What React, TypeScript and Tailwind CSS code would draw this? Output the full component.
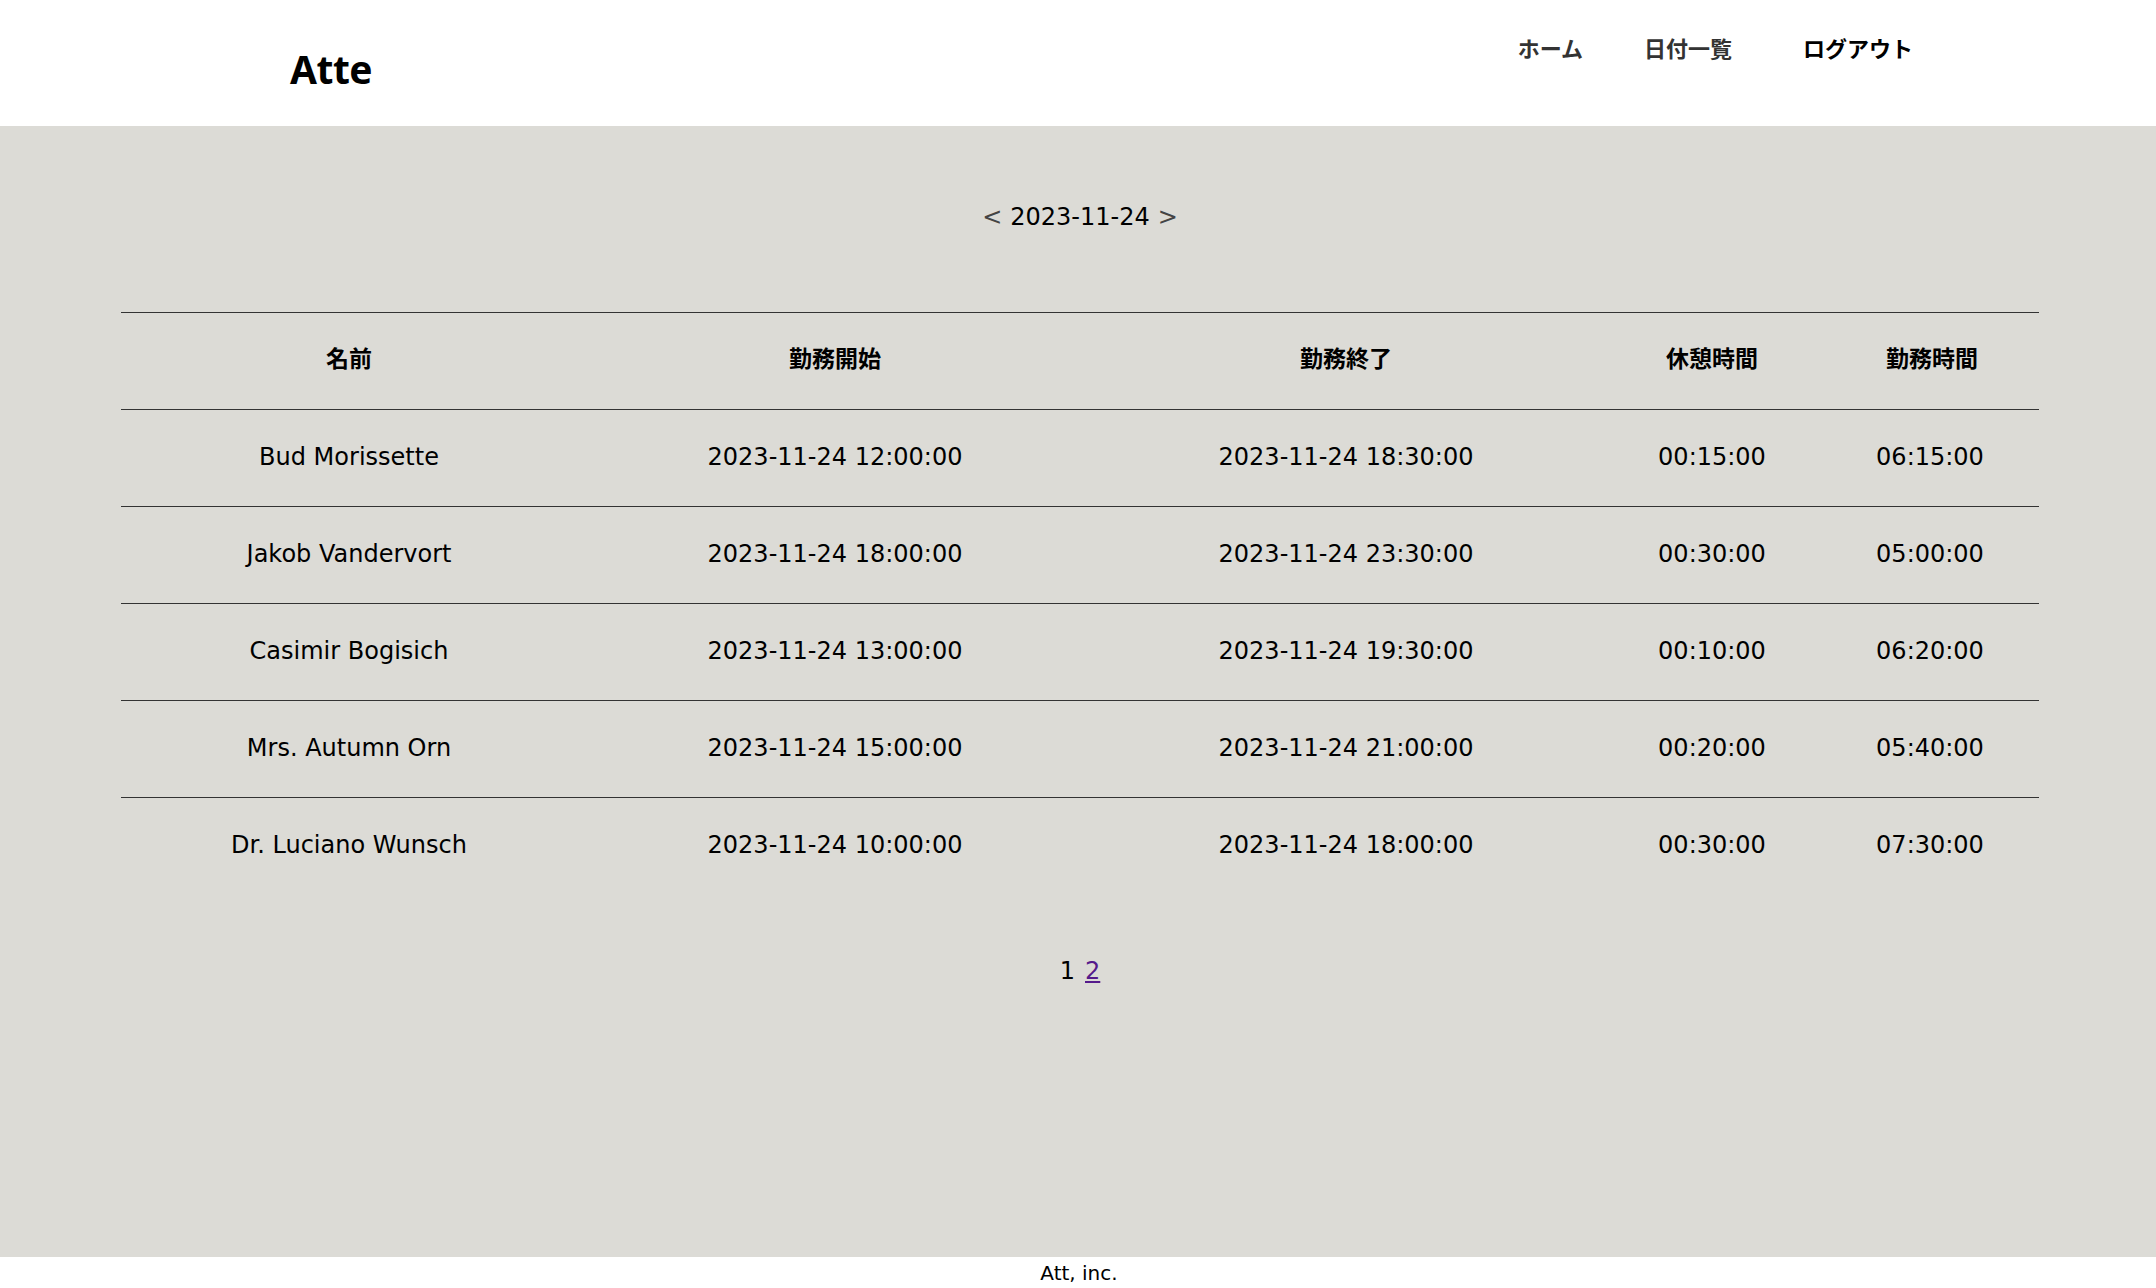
import React from "react";

const rows = [
  ["Bud Morissette", "2023-11-24 12:00:00", "2023-11-24 18:30:00", "00:15:00", "06:15:00"],
  ["Jakob Vandervort", "2023-11-24 18:00:00", "2023-11-24 23:30:00", "00:30:00", "05:00:00"],
  ["Casimir Bogisich", "2023-11-24 13:00:00", "2023-11-24 19:30:00", "00:10:00", "06:20:00"],
  ["Mrs. Autumn Orn", "2023-11-24 15:00:00", "2023-11-24 21:00:00", "00:20:00", "05:40:00"],
  ["Dr. Luciano Wunsch", "2023-11-24 10:00:00", "2023-11-24 18:00:00", "00:30:00", "07:30:00"],
];

const headers = ["名前", "勤務開始", "勤務終了", "休憩時間", "勤務時間"];

const font = "font-['DejaVu_Sans','Noto_Sans_CJK_JP',sans-serif]";

export default function App() {
  return (
    <div className={`${font} min-h-screen flex flex-col bg-white text-black`}>
      <header className="h-[126px] flex justify-between items-start pl-[290px] pr-[243px] bg-white">
        <div className="mt-[50px] text-[39px] leading-[38px] font-bold font-['Noto_Sans','Noto_Sans_CJK_JP',sans-serif] tracking-[-0.5px]">
          Atte
        </div>
        <nav className="mt-[39px] flex items-center text-[22px] leading-[22px] font-bold">
          <a className="text-[#333]">ホーム</a>
          <a className="ml-[61px] text-[#333]">日付一覧</a>
          <a className="ml-[71px] text-black">ログアウト</a>
        </nav>
      </header>
      <main className="bg-[#dcdbd6] h-[1131px] flex flex-col">
        <div className="mt-[79px] self-center text-[24px] leading-[24px] flex items-center pl-[4px]">
          <span className="text-[#444]">&lt;</span>
          <span className="mx-[8px]">2023-11-24</span>
          <span className="text-[#444]">&gt;</span>
        </div>
        <div className="mt-[83px] ml-[121px] w-[1918px] text-[24px]">
          <div className="grid grid-cols-[456px_516px_506px_226px_214px] h-[97px] pb-[3px] border-t border-[#333] items-center text-center font-bold">
            {headers.map((h) => (
              <div key={h} className="text-[23px]">{h}</div>
            ))}
          </div>
          {rows.map((r, i) => (
            <div
              key={i}
              className="grid grid-cols-[456px_516px_506px_226px_214px] h-[97px] pb-[2px] border-t border-[#333] items-center text-center"
            >
              {r.map((c, j) => (
                <div key={j} className={j === 4 ? "pr-[4px]" : ""}>{c}</div>
              ))}
            </div>
          ))}
        </div>
        <div className="mt-[65px] self-center text-[24px] leading-[24px] flex gap-[10px] pl-[4px]">
          <span>1</span>
          <a className="text-[#551a8b] underline">2</a>
        </div>
      </main>
      <footer className="h-[31px] bg-white flex items-center justify-center text-[20px] leading-[20px] pl-[2px]">
        Att, inc.
      </footer>
    </div>
  );
}
